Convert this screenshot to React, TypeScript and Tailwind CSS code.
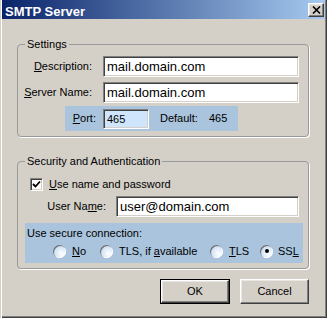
const font = "font-['Liberation_Sans',Arial,sans-serif]";

const sunken =
  'border border-t-[#808080] border-l-[#808080] border-r-white border-b-white shadow-[inset_1px_1px_0_#404040,inset_-1px_-1px_0_#d4d0c8]';
const raised =
  'border border-t-white border-l-white border-r-[#404040] border-b-[#404040] shadow-[inset_-1px_-1px_0_#808080,inset_1px_1px_0_#e8e6e2]';

const Field = ({ value, className = '' }: { value: string; className?: string }) => (
  <input
    readOnly
    value={value}
    className={`h-[21px] pl-[3px] text-[13px] text-black outline-none ${sunken} ${className}`}
  />
);

const Radio = ({ checked = false }: { checked?: boolean }) => (
  <span className="flex items-center justify-center w-[13px] h-[13px] rounded-full bg-[radial-gradient(circle_at_65%_65%,#ffffff_0%,#dbe9f7_45%,#a9c9e8_100%)] shadow-[inset_1px_1px_0_#707070,inset_-1px_-1px_0_#ffffff]">
    {checked && <span className="w-[4px] h-[4px] rounded-full bg-black" />}
  </span>
);

const Group = ({ title, className = '', children }: { title: string; className?: string; children: React.ReactNode }) => (
  <fieldset className={`ml-[15px] w-[292px] border border-[#9a9a9a] rounded-[4px] shadow-[1px_1px_0_#ffffff] ${className}`}>
    <legend className="ml-[7px] px-[2px] text-[11px] leading-[13px]">{title}</legend>
    {children}
  </fieldset>
);

export default function App() {
  return (
    <div className={`${font} w-[327px] h-[318px] bg-[#d4d0c8] text-black text-[11px] px-[2px] pb-[2px] shadow-[inset_1px_0_0_#d4d0c8,inset_2px_0_0_#ffffff,inset_-1px_-1px_0_#404040,inset_-2px_-2px_0_#808080]`}>
      <div className="h-[19px] flex items-center justify-between bg-[linear-gradient(to_right,#0a246a,#a6caf0)] pl-[3px] pr-[1px]">
        <span className="pt-[4px] text-[13px] leading-[15px] font-bold text-white">SMTP Server</span>
        <span className={`w-[16px] h-[14px] flex items-center justify-center bg-[#d4d0c8] ${raised}`}>
          <svg width="9" height="8" viewBox="0 0 9 8">
            <path d="M1 0.5 L8 7.5 M8 0.5 L1 7.5" stroke="#000" strokeWidth="1.6" />
          </svg>
        </span>
      </div>

      <Group title="Settings" className="mt-[19px] pt-[5px] pb-[5px]">
        <div className="flex items-center">
          <span className="w-[74px] text-right">
            <u>D</u>escription:
          </span>
          <Field value="mail.domain.com" className="ml-[11px] w-[196px] bg-white" />
        </div>
        <div className="flex items-center mt-[5px]">
          <span className="w-[74px] text-right">
            <u>S</u>erver Name:
          </span>
          <Field value="mail.domain.com" className="ml-[11px] w-[196px] bg-white" />
        </div>
        <div className="ml-[47px] mt-[3px] w-[173px] h-[25px] flex items-center pl-[5px] bg-[#a9c4dc]">
          <span className="w-[26px] text-right">
            <u>P</u>ort:
          </span>
          <input
            readOnly
            value="465"
            className={`ml-[7px] w-[46px] h-[20px] pl-[3px] text-[11px] outline-none bg-[#cfe5fc] ${sunken}`}
          />
          <span className="ml-[11px]">Default:</span>
          <span className="ml-[11px]">465</span>
        </div>
      </Group>

      <Group title="Security and Authentication" className="mt-[18px] pt-[9px] pb-[5px]">
        <div className="flex items-center h-[15px] pl-[12px]">
          <span className={`w-[13px] h-[13px] flex items-center justify-center bg-white ${sunken}`}>
            <svg width="9" height="9" viewBox="0 0 9 9">
              <path d="M1 4 L3.5 6.5 L8 1.5" fill="none" stroke="#000" strokeWidth="1.8" />
            </svg>
          </span>
          <span className="ml-[6px]">
            <u>U</u>se name and password
          </span>
        </div>
        <div className="flex items-center mt-[4px]">
          <span className="w-[88px] text-right">
            User Na<u>m</u>e:
          </span>
          <Field value="user@domain.com" className="ml-[10px] w-[183px] bg-white" />
        </div>
        <div className="ml-[7px] mt-[6px] w-[278px] h-[40px] bg-[#a9c4dc] pl-[2px] pt-[4px]">
          <div className="leading-[13px]">Use secure connection:</div>
          <div className="flex items-center mt-[4px] ml-[26px] h-[14px]">
            <span className="w-[47px] flex items-center">
              <Radio />
              <span className="ml-[6px]">
                <u>N</u>o
              </span>
            </span>
            <span className="w-[110px] flex items-center">
              <Radio />
              <span className="ml-[6px]">
                TLS, if <u>a</u>vailable
              </span>
            </span>
            <span className="w-[50px] flex items-center">
              <Radio />
              <span className="ml-[6px]">
                <u>T</u>LS
              </span>
            </span>
            <span className="flex items-center">
              <Radio checked />
              <span className="ml-[5px]">
                SS<u>L</u>
              </span>
            </span>
          </div>
        </div>
      </Group>

      <div className="flex justify-end gap-[10px] mt-[10px] mr-[16px]">
        <button className="w-[70px] h-[25px] border border-black bg-[#d4d0c8] p-0">
          <span className={`flex items-center justify-center w-full h-full ${raised}`}>OK</span>
        </button>
        <button className={`w-[69px] h-[25px] bg-[#d4d0c8] ${raised}`}>Cancel</button>
      </div>
    </div>
  );
}
